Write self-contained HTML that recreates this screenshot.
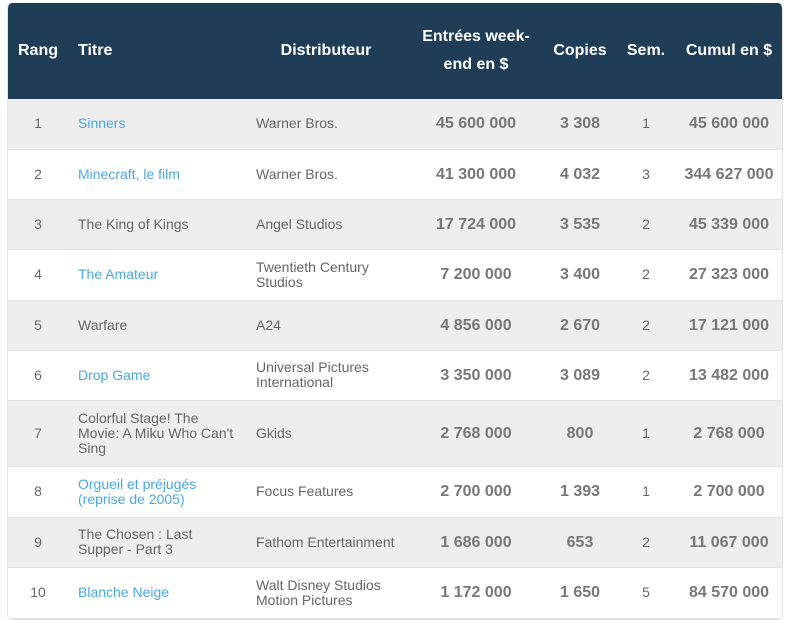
<!DOCTYPE html>
<html><head><meta charset="utf-8"><style>
body{margin:0;background:#fff;font-family:"Liberation Sans",Arial,sans-serif;}
.w{position:absolute;left:7px;top:3px;width:776px;border-radius:5px;overflow:hidden;border:1px solid #e4e4e4;border-top:none;box-sizing:border-box;}
table{border-collapse:collapse;width:776px;table-layout:fixed;}
th{background:#1f3d57;color:#fff;font-weight:bold;font-size:16px;height:96px;line-height:28px;padding:0;}
td{font-size:14px;color:#666;line-height:15px;padding:0;border-bottom:1px solid #e2e2e2;}
tr:nth-child(odd) td{background:#eeeeee;}
tr:nth-child(even) td{background:#fff;}
.c{text-align:center}
.l{text-align:left;padding-left:10px}
.t{padding-right:14px}
.b{font-weight:bold;font-size:16px;color:#777}
a{color:#4aa8e0;text-decoration:none}
</style></head><body>
<div class="w"><table>
<colgroup><col style="width:60px"><col style="width:178px"><col style="width:160px"><col style="width:140px"><col style="width:68px"><col style="width:64px"><col style="width:106px"></colgroup>
<thead><tr><th>Rang</th><th class="l">Titre</th><th class="c">Distributeur</th><th class="c">Entrées week-<br>end en $</th><th>Copies</th><th>Sem.</th><th style="padding-right:4px">Cumul en $</th></tr></thead>
<tbody>
<tr style="height:50px"><td class="c">1</td><td class="l t"><a>Sinners</a></td><td class="l">Warner Bros.</td><td class="c b">45 600 000</td><td class="c b">3 308</td><td class="c">1</td><td class="c b" style="padding-right:4px">45 600 000</td></tr>
<tr style="height:50px"><td class="c">2</td><td class="l t"><a>Minecraft, le film</a></td><td class="l">Warner Bros.</td><td class="c b">41 300 000</td><td class="c b">4 032</td><td class="c">3</td><td class="c b" style="padding-right:4px">344 627 000</td></tr>
<tr style="height:50px"><td class="c">3</td><td class="l t">The King of Kings</td><td class="l">Angel Studios</td><td class="c b">17 724 000</td><td class="c b">3 535</td><td class="c">2</td><td class="c b" style="padding-right:4px">45 339 000</td></tr>
<tr style="height:51px"><td class="c">4</td><td class="l t"><a>The Amateur</a></td><td class="l">Twentieth Century Studios</td><td class="c b">7 200 000</td><td class="c b">3 400</td><td class="c">2</td><td class="c b" style="padding-right:4px">27 323 000</td></tr>
<tr style="height:50px"><td class="c">5</td><td class="l t">Warfare</td><td class="l">A24</td><td class="c b">4 856 000</td><td class="c b">2 670</td><td class="c">2</td><td class="c b" style="padding-right:4px">17 121 000</td></tr>
<tr style="height:50px"><td class="c">6</td><td class="l t"><a>Drop Game</a></td><td class="l">Universal Pictures International</td><td class="c b">3 350 000</td><td class="c b">3 089</td><td class="c">2</td><td class="c b" style="padding-right:4px">13 482 000</td></tr>
<tr style="height:66px"><td class="c">7</td><td class="l t" style="white-space:nowrap">Colorful Stage! The<br>Movie: A Miku Who Can't<br>Sing</td><td class="l">Gkids</td><td class="c b">2 768 000</td><td class="c b">800</td><td class="c">1</td><td class="c b" style="padding-right:4px">2 768 000</td></tr>
<tr style="height:51px"><td class="c">8</td><td class="l t"><a>Orgueil et préjugés<br>(reprise de 2005)</a></td><td class="l">Focus Features</td><td class="c b">2 700 000</td><td class="c b">1 393</td><td class="c">1</td><td class="c b" style="padding-right:4px">2 700 000</td></tr>
<tr style="height:50px"><td class="c">9</td><td class="l t">The Chosen : Last<br>Supper - Part 3</td><td class="l">Fathom Entertainment</td><td class="c b">1 686 000</td><td class="c b">653</td><td class="c">2</td><td class="c b" style="padding-right:4px">11 067 000</td></tr>
<tr style="height:51px"><td class="c">10</td><td class="l t"><a>Blanche Neige</a></td><td class="l">Walt Disney Studios Motion Pictures</td><td class="c b">1 172 000</td><td class="c b">1 650</td><td class="c">5</td><td class="c b" style="padding-right:4px">84 570 000</td></tr>
</tbody></table></div>
</body></html>
